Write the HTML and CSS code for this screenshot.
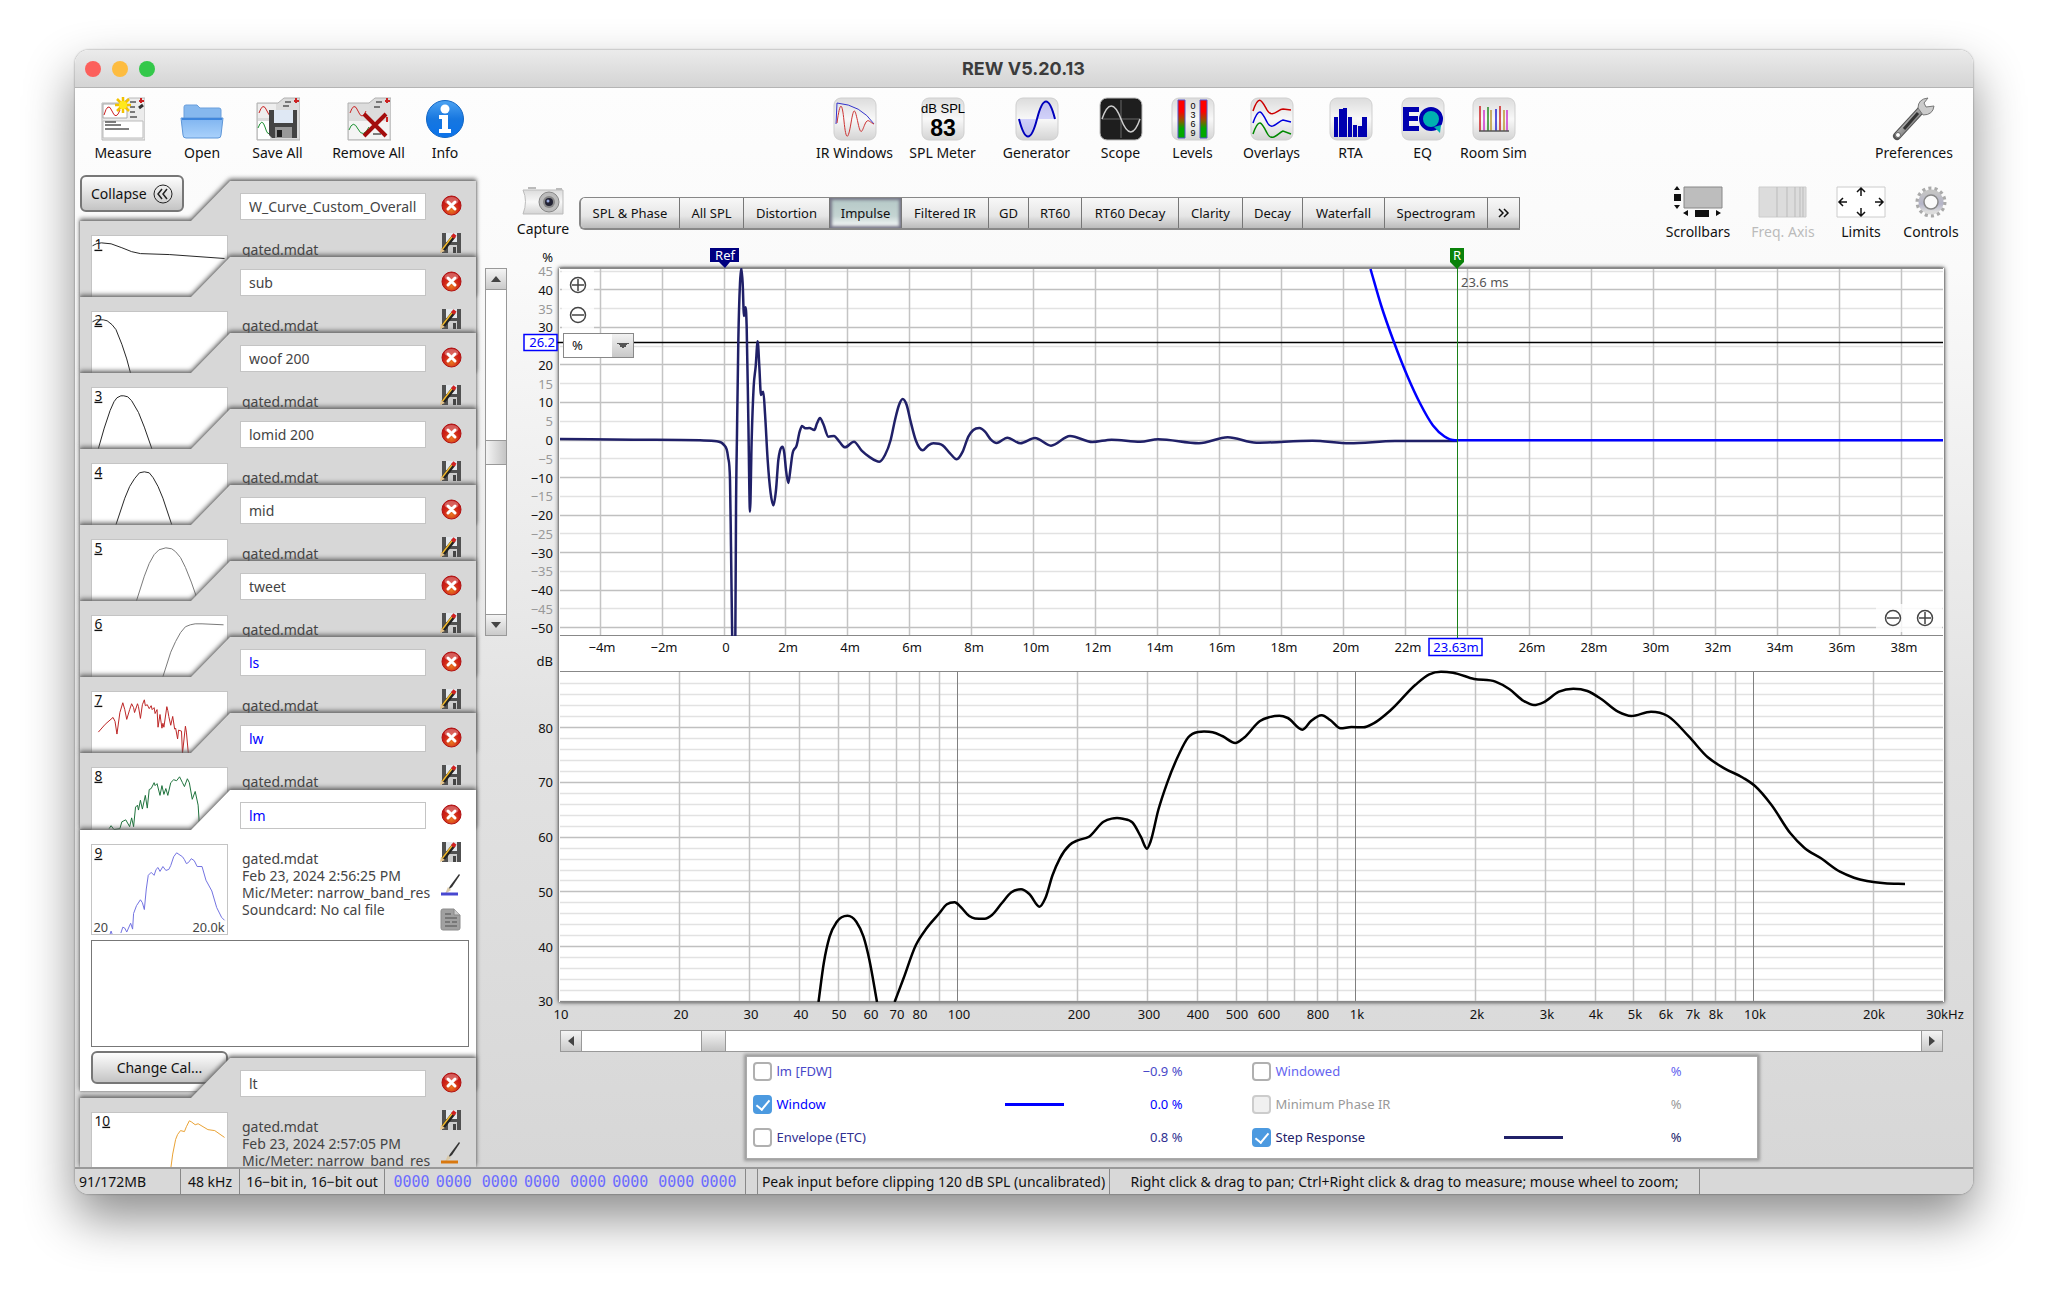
FILE: index.html
```html
<!DOCTYPE html>
<html lang="en">
<head>
<meta charset="utf-8">
<title>REW V5.20.13</title>
<link rel="stylesheet" href="styles.css">
</head>
<body>
<svg class="defs" aria-hidden="true">
  <defs>
    <linearGradient id="tile" x1="0" y1="0" x2="0" y2="1"><stop offset="0" stop-color="#dcdcdc"/><stop offset=".5" stop-color="#f8f8f8"/><stop offset="1" stop-color="#d4d4d4"/></linearGradient>
    <linearGradient id="folder" x1="0" y1="0" x2="0" y2="1"><stop offset="0" stop-color="#7fb4f0"/><stop offset="1" stop-color="#a9d1fb"/></linearGradient>
    <linearGradient id="info" x1="0" y1="0" x2="0" y2="1"><stop offset="0" stop-color="#4da3f2"/><stop offset=".5" stop-color="#1777e0"/><stop offset="1" stop-color="#0a72ea"/></linearGradient>
    <linearGradient id="level" x1="0" y1="0" x2="0" y2="1"><stop offset=".3" stop-color="#f00"/><stop offset=".55" stop-color="#8a5a00"/><stop offset=".75" stop-color="#00a800"/></linearGradient>
    <radialGradient id="red" cx=".5" cy=".75" r=".8"><stop offset="0" stop-color="#e87820"/><stop offset=".5" stop-color="#cf2418"/><stop offset="1" stop-color="#b80c10"/></radialGradient>
    <linearGradient id="steel" x1="0" y1="0" x2="1" y2="1"><stop offset="0" stop-color="#eee"/><stop offset=".5" stop-color="#999"/><stop offset="1" stop-color="#444"/></linearGradient>
    <linearGradient id="gear" x1="0" y1="0" x2="0" y2="1"><stop offset="0" stop-color="#c4c4c4"/><stop offset=".6" stop-color="#b4b4c8"/><stop offset="1" stop-color="#dcdcdc"/></linearGradient>
  </defs>
  <symbol id="i-delete" viewBox="0 0 21 21"><circle cx="10.500" cy="10.500" r="9.500" fill="url(#red)" stroke="#b01010"/><ellipse cx="10.500" cy="6" rx="7" ry="4" fill="#fff" opacity=".3"/><path d="M7 7l7 7M14 7l-7 7" stroke="#fff" stroke-width="3" stroke-linecap="round"/></symbol>
  <symbol id="i-save" viewBox="0 0 22 20"><path d="M2 0H21V20H2Z" fill="#505050"/><path d="M6 0H17V9H6Z" fill="#e4e8ec"/><path d="M8 12H17V20H8Z" fill="#ccc"/><path d="M13 14h3v6h-3z" fill="#444"/><path d="M3 17L14 3" stroke="#222" stroke-width="4"/><path d="M2.500 16L13 2.500" stroke="#f2b92c" stroke-width="1.500"/><path d="M12.500 4.500l2.500-3" stroke="#d02020" stroke-width="4"/><path d="M0 20l1-5 4 3z" fill="#e8c890"/></symbol>
  <symbol id="i-brush" viewBox="0 0 22 24"><path d="M19 1L10 13l-2 4 4-3L20 2z" fill="#333"/><path d="M8 14l3 3-6 4z" fill="#d8c8a8"/><path d="M1 21h17" stroke="currentColor" stroke-width="3"/></symbol>
  <symbol id="i-note" viewBox="0 0 22 24"><path d="M3 1h11l6 6v13q0 2-2 2H3q-2 0-2-2V3q0-2 2-2z" fill="#a0a0a0" stroke="#8c8c8c"/><path d="M14 1v6h6" fill="#ccc" stroke="#888"/><path d="M5 6h6M5 10h12M5 14h5M12 14h5M5 18h12" stroke="#777" stroke-width="2"/></symbol>
</svg>

<main class="window">
  <header class="titlebar">
    <div class="lights"><i class="light red"></i><i class="light amber"></i><i class="light green"></i></div>
    <h1>REW V5.20.13</h1>
  </header>

  <nav class="toolbar" aria-label="Main toolbar">
    <div class="group group-file">
      <button class="tool"><svg width="44" height="44" viewBox="0 0 44 44"><path d="M1 6H21L28 1H44V43H1Z" fill="#ececec" stroke="#b8b8b8"/><path d="M2 7H26V21H2Z" fill="#fff" stroke="#aaa"/><path d="M3 18Q7 4 11 14T19 13" fill="none" stroke="#c22"/><path d="M2 24H42V41H2Z" fill="#fff" stroke="#bbb"/><path d="M4 25h11M4 28h16M4 32h24M29 5h6M29 10h5M29 15h5M29 20h7" stroke="#555" stroke-width="1.500"/><path d="M40 1v5M38 4h5" stroke="#c22" stroke-width="2"/><path d="M38 11l4-3" stroke="#333" stroke-width="3"/><path d="M22 0v16M14 8h16M16 2l12 12M28 2L16 14" stroke="#f2c200" stroke-width="2.500"/><circle cx="22" cy="8" r="4" fill="#ffe81c"/></svg>Measure</button>
      <button class="tool"><svg width="44" height="44" viewBox="0 0 44 44"><path d="M4 22V10q0-2 2-2h11l3 3h19q2 0 2 2v9z" fill="#86b8ee" stroke="#6a9fdc"/><path d="M1 21H43L41 38q0 3-3 3H6q-3 0-3-3z" fill="url(#folder)" stroke="#5f97d8"/><path d="M2 22H42" stroke="#3f86dc" stroke-width="2"/></svg>Open</button>
      <button class="tool"><svg width="44" height="44" viewBox="0 0 44 44"><path d="M1 6H22L28 1H44V43H1Z" fill="#dcdcdc" stroke="#b0b0b0"/><path d="M2 7H20V21H2Z" fill="#eee"/><path d="M2 24H14V42H2Z" fill="#fff"/><path d="M3 16Q7 4 11 14T19 14" fill="none" stroke="#c22"/><path d="M2 31Q6 20 9 30T14 35" fill="none" stroke="#1a9030"/><path d="M29 5h6M27 9h6" stroke="#555" stroke-width="1.500"/><path d="M40 1v5M38 4h5" stroke="#c22" stroke-width="2"/><path d="M13 13H41V41H16L13 38Z" fill="#444"/><path d="M18 13H37V26H18Z" fill="#dfe8f4"/><path d="M19 30H36V41H19Z" fill="#999"/><path d="M21 33h5v7h-5z" fill="#222"/></svg>Save All</button>
      <button class="tool"><svg width="44" height="44" viewBox="0 0 44 44"><path d="M1 6H22L28 1H44V43H1Z" fill="#dcdcdc" stroke="#b0b0b0"/><path d="M2 7H22V21H2Z" fill="#ddd"/><path d="M2 24H42V42H2Z" fill="#f4f4f4"/><path d="M3 16Q7 4 11 14T19 14" fill="none" stroke="#c22"/><path d="M2 33Q6 22 11 32T22 30" fill="none" stroke="#1a9030"/><path d="M29 5h6M27 10h6M26 37h8" stroke="#555" stroke-width="1.500"/><path d="M40 1v5M38 4h5M40 20v5" stroke="#c22" stroke-width="2"/><path d="M17 17L39 39M39 17L17 39" stroke="#a30c0c" stroke-width="4"/></svg>Remove All</button>
      <button class="tool"><svg width="44" height="44" viewBox="0 0 44 44"><circle cx="22" cy="22" r="18.500" fill="url(#info)" stroke="#1266c4"/><circle cx="22" cy="12" r="4.500" fill="#fff"/><path d="M16 18H25V32H28V36H16V32H19V22H16Z" fill="#fff"/></svg>Info</button>
    </div>
    <div class="group group-tools">
      <button class="tool"><svg width="44" height="44" viewBox="0 0 44 44"><rect x="1" y="1" width="42" height="42" rx="7" fill="url(#tile)" stroke="#cfcfcf"/><path d="M3 27L4 6Q28 8 41 27" fill="none" stroke="#33c"/><path d="M4 26C7 4 9 4 11 24S15 44 18 26S22 12 25 26S29 34 32 27S37 26 41 27" fill="none" stroke="#c33"/></svg>IR Windows</button>
      <button class="tool"><svg width="44" height="44" viewBox="0 0 44 44"><rect x="1" y="1" width="42" height="42" rx="7" fill="url(#tile)" stroke="#cfcfcf"/><text x="22" y="16" class="dial-unit">dB SPL</text><text x="22" y="39" class="dial">83</text></svg>SPL Meter</button>
      <button class="tool"><svg width="44" height="44" viewBox="0 0 44 44"><rect x="1" y="1" width="42" height="42" rx="7" fill="url(#tile)" stroke="#cfcfcf"/><path d="M4 22Q13 57 22 22Q31 -13 40 22Z" fill="#88f" fill-opacity=".35"/><path d="M4 22Q13 57 22 22T40 22" fill="none" stroke="#00b" stroke-width="2"/></svg>Generator</button>
      <button class="tool"><svg width="44" height="44" viewBox="0 0 44 44"><rect x="1" y="1" width="42" height="42" rx="7" fill="#1e1e1e" stroke="#bbb"/><path d="M22 3V41M3 22H41" stroke="#666"/><path d="M3 22Q12 -4 22 22T41 22" fill="none" stroke="#ccc" stroke-width="1.500"/></svg>Scope</button>
      <button class="tool"><svg width="44" height="44" viewBox="0 0 44 44"><rect x="1" y="1" width="42" height="42" rx="7" fill="url(#tile)" stroke="#cfcfcf"/><path d="M7 3h7v38H7zM29 3h7v38h-7z" fill="url(#level)" stroke="#55c"/><g class="marks"><text x="22" y="12">0</text><text x="22" y="21">3</text><text x="22" y="30">6</text><text x="22" y="39">9</text></g></svg>Levels</button>
      <button class="tool"><svg width="44" height="44" viewBox="0 0 44 44"><rect x="1" y="1" width="42" height="42" rx="7" fill="url(#tile)" stroke="#cfcfcf"/><g fill="none" stroke-width="1.500"><path d="M3 14C9-4 12 4 17 13S28 12 33 12T41 13" stroke="#c00"/><path d="M3 26C9 8 12 15 17 25S28 24 33 23T41 25" stroke="#00d"/><path d="M3 37C9 19 12 26 17 36S28 36 33 34T41 37" stroke="#080"/></g></svg>Overlays</button>
      <button class="tool"><svg width="44" height="44" viewBox="0 0 44 44"><rect x="1" y="1" width="42" height="42" rx="7" fill="url(#tile)" stroke="#cfcfcf"/><path d="M5 20h4v20H5zM10 12h4v28h-4zM14 11h4v29h-4zM19 20h4v20h-4zM24 28h4v12h-4zM29 29h4v11h-4zM33 20h5v20h-5z" fill="#0000b0"/></svg>RTA</button>
      <button class="tool"><svg width="44" height="44" viewBox="0 0 44 44"><rect x="1" y="1" width="42" height="42" rx="7" fill="url(#tile)" stroke="#cfcfcf"/><path d="M2 10H18V15H8V19H17V24H8V29H18V34H2Z" fill="#0000b0"/><circle cx="30" cy="22" r="10" fill="#00b0b0" stroke="#0000b0" stroke-width="4"/><path d="M33 30l7-2-1 8z" fill="#00b0b0"/></svg>EQ</button>
      <button class="tool"><svg width="44" height="44" viewBox="0 0 44 44"><rect x="1" y="1" width="42" height="42" rx="7" fill="url(#tile)" stroke="#cfcfcf"/><g stroke-width="1.500"><path d="M8 9V34M28 9V34" stroke="#c22"/><path d="M12 13V34M35 13V34" stroke="#c3c"/><path d="M16 10V34" stroke="#282"/><path d="M19 13V34M32 13V34" stroke="#b93"/><path d="M24 12V34" stroke="#22c"/><path d="M7 34H37" stroke="#555"/></g></svg>Room Sim</button>
    </div>
    <div class="group group-prefs">
      <button class="tool"><svg width="44" height="44" viewBox="0 0 44 44"><path d="M5 39L29 13" stroke="#555" stroke-width="8" stroke-linecap="round"/><path d="M6 38L29 13" stroke="url(#steel)" stroke-width="6" stroke-linecap="round"/><path d="M12 32L26 16" stroke="#333" stroke-width="3"/><path d="M26 11Q26 2 36 1L32 6L34 10L42 9Q41 18 31 18Z" fill="#ccc" stroke="#777"/><circle cx="6" cy="38" r="2.500" fill="#fff" stroke="#666"/></svg>Preferences</button>
    </div>
  </nav>

  <div class="content">
    <aside class="sidebar">
      <button class="push collapse">Collapse <svg width="20" height="20" viewBox="0 0 20 20" fill="none" stroke="#222"><circle cx="10" cy="10" r="9"/><path d="M9 5L5 10l4 5M14 5l-4 5 4 5" stroke-width="1.500"/></svg></button>
      <div class="cards">
        <section class="card"><div class="shape"></div>
          <svg class="thumb" viewBox="0 0 137 91"><polyline stroke="#222" points="0,10 4,8 9,7 19,8 30,12 40,16 49,18 79,19 135,23"/><text x="2" y="13" class="num">1</text></svg>
          <div class="meta"><input class="name" aria-label="Measurement 1 name" value="W_Curve_Custom_Overall"><p>gated.mdat</p></div>
          <div class="acts"><button aria-label="Remove"><svg width="21" height="21"><use href="#i-delete"/></svg></button><button aria-label="Save"><svg width="22" height="20"><use href="#i-save"/></svg></button></div></section>
        <section class="card"><div class="shape"></div>
          <svg class="thumb" viewBox="0 0 137 91"><polyline stroke="#222" points="0,10 4,8 11,8 15,9 20,13 24,18 30,33 35,48 39,63"/><text x="2" y="13" class="num">2</text></svg>
          <div class="meta"><input class="name" aria-label="Measurement 2 name" value="sub"><p>gated.mdat</p></div>
          <div class="acts"><button aria-label="Remove"><svg width="21" height="21"><use href="#i-delete"/></svg></button><button aria-label="Save"><svg width="22" height="20"><use href="#i-save"/></svg></button></div></section>
        <section class="card"><div class="shape"></div>
          <svg class="thumb" viewBox="0 0 137 91"><polyline stroke="#222" points="6,62 12,41 18,23 22,14 25,10 29,8 32,8 36,9 40,13 47,25 53,40 61,63"/><text x="2" y="13" class="num">3</text></svg>
          <div class="meta"><input class="name" aria-label="Measurement 3 name" value="woof 200"><p>gated.mdat</p></div>
          <div class="acts"><button aria-label="Remove"><svg width="21" height="21"><use href="#i-delete"/></svg></button><button aria-label="Save"><svg width="22" height="20"><use href="#i-save"/></svg></button></div></section>
        <section class="card"><div class="shape"></div>
          <svg class="thumb" viewBox="0 0 137 91"><polyline stroke="#222" points="24,62 33,35 38,23 43,15 48,9 53,8 58,9 62,14 67,23 72,35 81,62"/><text x="2" y="13" class="num">4</text></svg>
          <div class="meta"><input class="name" aria-label="Measurement 4 name" value="lomid 200"><p>gated.mdat</p></div>
          <div class="acts"><button aria-label="Remove"><svg width="21" height="21"><use href="#i-delete"/></svg></button><button aria-label="Save"><svg width="22" height="20"><use href="#i-save"/></svg></button></div></section>
        <section class="card"><div class="shape"></div>
          <svg class="thumb" viewBox="0 0 137 91"><polyline stroke="#777" points="45,62 53,37 58,24 63,15 68,10 75,8 81,9 85,12 90,18 95,28 101,43 108,63"/><text x="2" y="13" class="num">5</text></svg>
          <div class="meta"><input class="name" aria-label="Measurement 5 name" value="mid"><p>gated.mdat</p></div>
          <div class="acts"><button aria-label="Remove"><svg width="21" height="21"><use href="#i-delete"/></svg></button><button aria-label="Save"><svg width="22" height="20"><use href="#i-save"/></svg></button></div></section>
        <section class="card"><div class="shape"></div>
          <svg class="thumb" viewBox="0 0 137 91"><polyline stroke="#777" points="72,62 80,37 85,26 90,17 95,11 100,9 105,8 112,8 134,9"/><text x="2" y="13" class="num">6</text></svg>
          <div class="meta"><input class="name" aria-label="Measurement 6 name" value="tweet"><p>gated.mdat</p></div>
          <div class="acts"><button aria-label="Remove"><svg width="21" height="21"><use href="#i-delete"/></svg></button><button aria-label="Save"><svg width="22" height="20"><use href="#i-save"/></svg></button></div></section>
        <section class="card"><div class="shape"></div>
          <svg class="thumb" viewBox="0 0 137 91"><polyline stroke="#b22" points="6,41 13,33 21,26 23,30 25,43 28,21 31,11 33,18 35,28 38,18 40,12 42,16 43,21 46,12 47,15 49,27 51,13 53,8 54,14 56,13 58,17 60,14 61,18 63,16 64,22 66,18 67,36 69,23 71,37 72,32 73,36 76,15 77,19 78,25 80,34 82,25 84,38 85,37 87,48 88,39 91,40 92,63 95,35 96,41 98,63"/><text x="2" y="13" class="num">7</text></svg>
          <div class="meta"><input class="name own" aria-label="Measurement 7 name" value="ls"><p>gated.mdat</p></div>
          <div class="acts"><button aria-label="Remove"><svg width="21" height="21"><use href="#i-delete"/></svg></button><button aria-label="Save"><svg width="22" height="20"><use href="#i-save"/></svg></button></div></section>
        <section class="card"><div class="shape"></div>
          <svg class="thumb" viewBox="0 0 137 91"><polyline stroke="#1a7038" points="17,62 19,59 22,63 28,62 30,55 34,53 38,60 40,51 42,60 44,40 46,38 47,43 49,33 51,42 54,28 56,41 58,22 60,21 63,15 64,18 66,16 69,28 71,18 73,27 75,21 77,28 80,15 83,12 86,13 89,9 92,15 94,19 97,11 99,15 102,32 105,24 108,38 109,54 110,63"/><text x="2" y="13" class="num">8</text></svg>
          <div class="meta"><input class="name own" aria-label="Measurement 8 name" value="lw"><p>gated.mdat</p></div>
          <div class="acts"><button aria-label="Remove"><svg width="21" height="21"><use href="#i-delete"/></svg></button><button aria-label="Save"><svg width="22" height="20"><use href="#i-save"/></svg></button></div></section>
        <section class="card selected"><div class="shape"></div>
          <svg class="thumb" viewBox="0 0 137 91"><g stroke="#7070e0"><polyline points="18,91 19,88 20,91"/><polyline points="29,90 31,84 33,85 35,89 39,80 41,86 42,70 45,62 49,56 51,59 53,66 55,45 57,31 60,28 63,31 65,25 67,23 69,27 72,22 75,26 78,25 80,21 83,12 86,8 92,12 94,15 96,19 98,18 101,14 104,16 107,22 112,22 116,36 122,47 127,64 132,74 135,77"/></g><text x="2" y="13" class="num">9</text><text x="1" y="89" class="range">20</text><text x="135" y="89" class="range end">20.0k</text></svg>
          <div class="meta"><input class="name own" aria-label="Measurement 9 name" value="lm"><p>gated.mdat<br>Feb 23, 2024 2:56:25 PM<br>Mic/Meter: narrow_band_res<br>Soundcard: No cal file</p></div>
          <div class="acts"><button aria-label="Remove"><svg width="21" height="21"><use href="#i-delete"/></svg></button><button aria-label="Save"><svg width="22" height="20"><use href="#i-save"/></svg></button><button class="tint-blue" aria-label="Trace colour"><svg width="22" height="24"><use href="#i-brush"/></svg></button><button aria-label="Notes"><svg width="22" height="24"><use href="#i-note"/></svg></button></div>
          <textarea class="notes" aria-label="Notes for lm"></textarea>
          <button class="push change">Change Cal...</button></section>
        <section class="card last"><div class="shape"></div>
          <svg class="thumb" viewBox="0 0 137 91"><polyline stroke="#e8a030" points="80,57 82,42 85,27 87,22 90,18 94,19 96,14 99,8 101,9 105,12 108,11 118,17 125,18 135,25"/><text x="2" y="13" class="num plain">1<tspan class="num">0</tspan></text></svg>
          <div class="meta"><input class="name" aria-label="Measurement 10 name" value="lt"><p>gated.mdat<br>Feb 23, 2024 2:57:05 PM<br>Mic/Meter: narrow_band_res</p></div>
          <div class="acts"><button aria-label="Remove"><svg width="21" height="21"><use href="#i-delete"/></svg></button><button aria-label="Save"><svg width="22" height="20"><use href="#i-save"/></svg></button><button class="tint-orange" aria-label="Trace colour"><svg width="22" height="24"><use href="#i-brush"/></svg></button></div></section>
      </div>
    </aside>

    <div class="vscroll">
      <button class="arrow" aria-label="Up"><svg width="10" height="6"><path d="M0 6L5 0l5 6z"/></svg></button>
      <div class="gap-before"></div><div class="knob"></div><div class="gap-after"></div>
      <button class="arrow" aria-label="Down"><svg width="10" height="6"><path d="M0 0L5 6l5-6z"/></svg></button>
    </div>

    <section class="graph">
      <div class="graph-head">
        <button class="tool capture"><svg width="42" height="28" viewBox="0 0 42 28"><path d="M6 1h8M34 2h6" stroke="#bbb" stroke-width="2"/><path d="M1 3H41V27H1Q6 14 1 3Z" fill="url(#tile)" stroke="#bbb"/><circle cx="27" cy="15" r="10" fill="#bbb" stroke="#888"/><circle cx="27" cy="15" r="6" fill="#888"/><circle cx="27" cy="15" r="4" fill="#223"/><circle cx="26" cy="14" r="1.500" fill="#9ad"/></svg>Capture</button>
        <div class="tabs" role="tablist">
          <button role="tab">SPL &amp; Phase</button><button role="tab">All SPL</button><button role="tab">Distortion</button><button role="tab" class="on" aria-selected="true">Impulse</button><button role="tab">Filtered IR</button><button role="tab">GD</button><button role="tab">RT60</button><button role="tab">RT60 Decay</button><button role="tab">Clarity</button><button role="tab">Decay</button><button role="tab">Waterfall</button><button role="tab">Spectrogram</button><button aria-label="More tabs"><svg width="12" height="10" fill="none" stroke="#111" stroke-width="1.500"><path d="M1 1l4 4-4 4M6 1l4 4-4 4"/></svg></button>
        </div>
        <div class="options">
          <button class="tool"><svg width="50" height="32" viewBox="0 0 50 32"><path d="M11 1H49V22H11Z" fill="#bdbdbd" stroke="#888"/><path d="M1 4L4 0l3 4zM1 19l3 4 3-4zM15 24v6l-5-3zM43 24v6l5-3zM1 8h7v7H1zM22 24h14v7H22z" fill="#111"/></svg>Scrollbars</button>
          <button class="tool" disabled><svg width="50" height="32" viewBox="0 0 50 32"><path d="M1 1H48V31H1Z" fill="#dcdcdc" stroke="#ccc"/><path d="M19 1V31M29 1V31M37 1V31M42 1V31M45 1V31" stroke="#bbb"/></svg>Freq. Axis</button>
          <button class="tool"><svg width="50" height="32" viewBox="0 0 50 32" fill="none"><path d="M1 1H49V31H1Z" fill="#fff" stroke="#ccc"/><path d="M25 2V10M21 6l4-4 4 4M25 30V22M21 26l4 4 4-4M3 16H11M7 12l-4 4 4 4M47 16H39M43 12l4 4-4 4" stroke="#111" stroke-width="1.500"/></svg>Limits</button>
          <button class="tool"><svg width="32" height="32" viewBox="0 0 32 32" fill="none"><circle cx="16" cy="16" r="13.500" stroke="#aaa" stroke-width="4" stroke-dasharray="3 3.060"/><circle cx="16" cy="16" r="9.500" stroke="url(#gear)" stroke-width="6"/><circle cx="16" cy="16" r="7" fill="#fafafa" stroke="#888" stroke-width="1.500"/></svg>Controls</button>
        </div>
      </div>

      <div class="chart-wrap">
        <svg id="chart" class="chart" viewBox="510 240 1458 788" role="img" aria-label="Impulse response and frequency response"></svg>
        <div class="zoom zoom-y">
          <button aria-label="Zoom in vertically"><svg width="18" height="18"><circle cx="9" cy="9" r="7.500"/><path d="M3 9h12M9 3v12"/></svg></button>
          <button aria-label="Zoom out vertically"><svg width="18" height="18"><circle cx="9" cy="9" r="7.500"/><path d="M3 9h12"/></svg></button>
        </div>
        <select class="unit" aria-label="Vertical unit"><option>%</option></select>
        <div class="zoom zoom-x">
          <button aria-label="Zoom out horizontally"><svg width="18" height="18"><circle cx="9" cy="9" r="7.500"/><path d="M3 9h12"/></svg></button>
          <button aria-label="Zoom in horizontally"><svg width="18" height="18"><circle cx="9" cy="9" r="7.500"/><path d="M3 9h12M9 3v12"/></svg></button>
        </div>
      </div>

      <div class="hscroll">
        <button class="arrow" aria-label="Left"><svg width="6" height="10"><path d="M6 0L0 5l6 5z"/></svg></button>
        <div class="gap-before"></div><div class="knob"></div><div class="gap-after"></div>
        <button class="arrow" aria-label="Right"><svg width="6" height="10"><path d="M0 0l6 5-6 5z"/></svg></button>
      </div>

      <div class="legend">
        <div class="trace c-fdw"><label><input type="checkbox">lm [FDW]</label><i></i><output>−0.9 %</output></div>
        <div class="trace c-windowed"><label><input type="checkbox">Windowed</label><i></i><output>%</output></div>
        <div class="trace c-window"><label><input type="checkbox" checked>Window</label><i class="sample"></i><output>0.0 %</output></div>
        <div class="trace c-off"><label><input type="checkbox" disabled>Minimum Phase IR</label><i></i><output>%</output></div>
        <div class="trace c-env"><label><input type="checkbox">Envelope (ETC)</label><i></i><output>0.8 %</output></div>
        <div class="trace c-step"><label><input type="checkbox" checked>Step Response</label><i class="sample"></i><output>%</output></div>
      </div>
    </section>
  </div>

  <footer class="status">
    <span>91/172MB</span><span>48 kHz</span><span>16−bit in, 16−bit out</span>
    <span class="bits"><b>0000</b><b>0000</b><b class="word">0000</b><b>0000</b><b class="word">0000</b><b>0000</b><b class="word">0000</b><b>0000</b></span>
    <span></span><span>Peak input before clipping 120 dB SPL (uncalibrated)</span><span>Right click &amp; drag to pan; Ctrl+Right click &amp; drag to measure; mouse wheel to zoom;</span><span></span>
  </footer>
</main>
<script src="charts.js"></script>
</body>
</html>
```
FILE: styles.css
```css
* { box-sizing: border-box; }
body { margin: 0; padding: 50px 75px 99px; background: #fff; font: 14px/17px "Noto Sans", "Open Sans", sans-serif; color: #111; }
button, input, select, textarea { font: inherit; color: inherit; margin: 0; }
button { padding: 0; border: 0; background: none; }
.defs { position: absolute; width: 0; height: 0; }

.window { display: flex; flex-direction: column; border-radius: 14px; overflow: hidden; background: linear-gradient(#fdfdfd 37px, #fafafa 220px, #e2e2e2 680px, #d7d7d7 1118px); box-shadow: 0 0 2px rgba(0,0,0,.5), 0 24px 50px rgba(0,0,0,.45); }
.titlebar { display: grid; grid-template-columns: 1fr auto 1fr; align-items: center; height: 38px; padding: 0 11px 0 10px; background: linear-gradient(#ebebeb, #d4d4d4); border-bottom: 1px solid #b4b4b4; }
.titlebar h1 { margin: 0; font: 700 18px/20px Inter, sans-serif; color: #3c3c3c; }
.lights { display: flex; gap: 11px; }
.light { width: 16px; height: 16px; border-radius: 50%; }
.light.red { background: #fc605c; }
.light.amber { background: #fdbc40; }
.light.green { background: #34c84a; }

.toolbar { display: flex; justify-content: space-between; height: 82px; padding: 9px 18px 0 7px; }
.group { display: grid; }
.group-file { grid-template-columns: 82px 76px 75px 107px 46px; }
.group-tools { grid-template-columns: 90px 86px 102px 66px 78px 80px 78px 66px 76px; }
.group-prefs { grid-template-columns: 82px; }
.tool { display: flex; flex-direction: column; align-items: center; gap: 3px; white-space: nowrap; }
.tool:disabled { color: #bbb; }
.tool svg { flex: none; }
.dial-unit { font: 13px "Liberation Sans", sans-serif; text-anchor: middle; }
.dial { font: 700 23px "Liberation Sans", sans-serif; text-anchor: middle; }
.marks { font: 9px "Liberation Sans", sans-serif; text-anchor: middle; }

.content { display: grid; grid-template-columns: 401px 29px minmax(0, 1fr); padding: 0 5px; overflow: hidden; }
.push { border: 2px solid #777; border-radius: 6px; background: linear-gradient(#fdfdfd, #e4e4e4 45%, #c4c4c4); }
.collapse { display: flex; align-items: center; justify-content: space-between; width: 104px; height: 37px; margin-top: 5px; padding: 0 9px; position: relative; z-index: 1; }
.cards { width: 396px; margin-top: -31px; }
.card { position: relative; isolation: isolate; display: grid; grid-template-columns: 137px 186px 22px; grid-template-rows: 104px auto; column-gap: 13px; height: 116px; margin-bottom: -40px; padding: 12px 10px 0 11px; color: #444; }
.shape { position: absolute; inset: 0; z-index: -1; filter: drop-shadow(0 0 1px #777) drop-shadow(0 -2px 2px rgba(80,80,80,.8)); }
.shape::before { content: ""; position: absolute; inset: 0; background: #d7d7d7; clip-path: polygon(0 40px, 111px 40px, 150px 0, 100% 0, 100% 100%, 0 100%); }
.selected { height: 301px; margin: 1px 0 -33px; grid-template-rows: 147px 106px 33px; }
.selected .shape::before { background: #fff; }
.last { height: 109px; margin-bottom: 0; }
.thumb { width: 137px; height: 91px; margin-top: 42px; border: 1px solid #c4c4c4; background: #fff; overflow: hidden; }
.thumb polyline { fill: none; }
.num { fill: #111; text-decoration: underline; }
.num.plain { text-decoration: none; }
.range { fill: #444; font-size: 13px; }
.range.end { text-anchor: end; }
.meta { min-width: 0; margin-left: -1px; }
.meta p { margin: 21px 0 0 2px; white-space: nowrap; }
.name { display: block; width: 186px; height: 27px; padding: 0 8px; border: 1px solid #c4c4c4; background: #fff; }
.name.own { color: #00f; }
.acts { display: flex; flex-direction: column; align-items: center; padding-top: 2px; }
.acts button, .acts svg { display: block; }
.acts button:nth-child(2) { margin-top: 17px; }
.acts button:nth-child(3) { margin-top: 11px; }
.acts button:nth-child(4) { margin-top: 11px; }
.tint-blue { color: #4848d0; }
.tint-orange { color: #d87810; }
.notes { grid-column: 1 / -1; width: 378px; height: 107px; margin-top: -9px; border: 1px solid #777; background: #fff; resize: none; }
.change { width: 137px; height: 33px; margin-top: -4px; color: #111; }

.vscroll { display: flex; flex-direction: column; align-self: start; width: 22px; height: 368px; margin: 98px 0 0 4px; border: 1px solid #999; background: #fff; }
.hscroll { display: flex; height: 22px; margin: 2px 25px 0 50px; border: 1px solid #999; background: #fff; }
.arrow { flex: none; display: grid; place-items: center; width: 20px; height: 20px; background: linear-gradient(#f4f4f4, #cacaca); outline: 1px solid #999; fill: #444; }
.knob { flex: none; background: linear-gradient(#f4f4f4, #c4c4c4); outline: 1px solid #999; }
.vscroll .knob { height: 23px; background: linear-gradient(90deg, #f4f4f4, #c4c4c4); }
.hscroll .knob { width: 23px; }
.vscroll .gap-before, .vscroll .gap-after { flex: 1; }
.hscroll .gap-before { flex: 10; }
.hscroll .gap-after { flex: 99; }

.graph { display: flex; flex-direction: column; min-width: 0; padding-bottom: 8px; font-size: 13px; }
.graph-head { display: flex; height: 70px; align-items: flex-start; }
.capture { width: 66px; margin: 17px 3px 0 0; gap: 5px; font-size: 14px; }
.tabs { display: grid; grid-template-columns: 99px 64px 86px 72px 87px 40px 53px 97px 64px 60px 82px 103px 32px; height: 33px; margin-top: 27px; border: solid #888; border-width: 1px 0 2px 2px; border-radius: 6px 0 0 6px; overflow: hidden; }
.tabs button { display: grid; place-items: center; white-space: nowrap; border-right: 1px solid #777; background: linear-gradient(#f8f8f8, #e6e6e6 60%, #bbb); }
.tabs .on { background: linear-gradient(#b4c8c6, #c4d4d2 60%, #fff); box-shadow: inset 0 0 3px 2px #778; }
.options { display: grid; grid-template-columns: 80px 90px 66px 74px; margin-left: auto; padding-top: 16px; font-size: 14px; }
.options .tool { gap: 5px; }

.chart-wrap { position: relative; }
.chart { display: block; width: 100%; }
.chart text { fill: #111; }
.chart .end { text-anchor: end; }
.chart .mid { text-anchor: middle; }
.chart .soft { fill: #999; }
.chart .readout { fill: #555; }
.chart .cursor { fill: #00f; }
.chart .flag { fill: #fff; }
.plot { fill: #fff; filter: drop-shadow(0 0 1px #555) drop-shadow(0 0 2px #555); }
.trace-line { fill: none; stroke-width: 2.500; stroke-linejoin: round; }
.zoom { position: absolute; display: flex; background: rgba(255,255,255,.8); }
.zoom svg { display: block; fill: none; stroke: #444; stroke-width: 1.500; }
.zoom-y { left: 52px; top: 30px; flex-direction: column; gap: 12px; padding: 6px 7px; }
.zoom-x { right: 26px; bottom: 396px; gap: 14px; padding: 5px 8px; }
.unit { position: absolute; left: 53px; top: 93px; width: 71px; height: 25px; padding: 0 8px; border: 1px solid #888; border-radius: 0; appearance: none; background: conic-gradient(from -45deg at 50% 100%, #555 90deg, transparent 0) no-repeat right 5px center/12px 6px, linear-gradient(#f2f2f2, #c8c8c8) no-repeat right/21px 100%, #fff; background: linear-gradient(to bottom right, #555 50%, transparent 50%) no-repeat right 4px center/6px 6px, linear-gradient(to bottom left, #555 50%, transparent 50%) no-repeat right 10px center/6px 6px, linear-gradient(#f2f2f2, #c8c8c8) no-repeat right/21px 100%, #fff; }

.legend { display: grid; grid-template-columns: 499px 499px; grid-auto-rows: 33px; align-self: center; width: 1012px; height: 103px; margin: 4px 0 0 25px; padding-left: 6px; background: #fff; border: 1px solid #aaa; box-shadow: 0 0 3px 2px #999; }
.trace { display: grid; grid-template-columns: 252px 59px 119px; align-items: center; height: 29px; }
.trace label { display: flex; align-items: center; gap: 5px; }
.trace output { text-align: right; }
.trace input { position: relative; appearance: none; width: 19px; height: 19px; border: 2px solid #b0b0b0; border-radius: 4px; background: #fff; }
.trace input:checked { border-color: #4c9ae0; background: #4c9ae0; }
.trace input:checked::after { content: ""; position: absolute; left: 4px; top: 0; width: 6px; height: 11px; border: solid #fff; border-width: 0 2px 2px 0; rotate: 40deg; }
.trace input:disabled { background: #f0f0f0; border-color: #ccc; }
.sample { height: 3px; background: currentColor; }
.c-fdw { color: #4848c8; }
.c-windowed { color: #6464f0; }
.c-window { color: #00f; }
.c-off { color: #999; }
.c-env { color: #303090; }
.c-step { color: #202068; }

.status { display: grid; grid-template-columns: 106px 59px 145px 361px 12px 352px 590px 1fr; height: 27px; border-top: 2px solid #999; background: #d8d8d8; white-space: nowrap; }
.status span { display: flex; align-items: center; justify-content: center; border-right: 1px solid #888; }
.status span:first-child { justify-content: flex-start; padding-left: 4px; }
.status span:last-child { border: 0; }
.status .bits { gap: 6px; font: 15px/20px "DejaVu Sans Mono", monospace; color: #6c6cff; }
.status .bits b { font-weight: 400; }
.status .word { margin-left: 4px; }
```
FILE: charts.js
```js
const svg = document.getElementById('chart');
const parts = [];
const rect = (x, y, w, h, attrs) => parts.push(`<rect x="${x}" y="${y}" width="${w}" height="${h}" ${attrs}/>`);
const line = (x1, y1, x2, y2, stroke, width = 1) => {
  parts.push(`<path d="M${x1} ${y1}L${x2} ${y2}" stroke="${stroke}" stroke-width="${width}"/>`);
};
const text = (x, y, str, cls) => parts.push(`<text x="${x}" y="${y}" class="${cls}">${str}</text>`);
const crisp = v => Math.floor(v) + 0.5;

// Monotone cubic interpolation through [x, y] points.
function smooth(pts) {
  const n = pts.length, d = [], h = [], m = [];
  for (let i = 0; i < n - 1; i++) {
    h.push(pts[i + 1][0] - pts[i][0]);
    d.push((pts[i + 1][1] - pts[i][1]) / h[i]);
  }
  m[0] = d[0];
  m[n - 1] = d[n - 2];
  for (let i = 1; i < n - 1; i++) {
    const mean = (d[i - 1] * h[i] + d[i] * h[i - 1]) / (h[i - 1] + h[i]);
    const limit = 3 * Math.min(Math.abs(d[i - 1]), Math.abs(d[i]));
    m[i] = d[i - 1] * d[i] <= 0 ? 0 : Math.sign(mean) * Math.min(Math.abs(mean), limit);
  }
  let out = `M${pts[0]}`;
  for (let i = 0; i < n - 1; i++) {
    const [x0, y0] = pts[i], [x1, y1] = pts[i + 1], k = h[i] / 3;
    out += `C${x0 + k} ${y0 + m[i] * k} ${x1 - k} ${y1 - m[i + 1] * k} ${x1} ${y1}`;
  }
  return out;
}
const trace = (pts, stroke, clip) => {
  parts.push(`<path class="trace-line" clip-path="url(#${clip})" stroke="${stroke}" d="${smooth(pts)}"/>`);
};

const L = 560, R = 1943;
parts.push('<clipPath id="top"><rect x="560" y="268" width="1383" height="368"/></clipPath>');
parts.push('<clipPath id="bottom"><rect x="560" y="670" width="1383" height="332"/></clipPath>');
rect(L - 1, 268, R - L + 2, 734, 'class="plot"');

// Impulse plot: time in ms against percent.
const tx = t => 724 + 30.99 * t;
const py = p => 440 - 3.755 * p;
for (let p = -50; p <= 45; p += 5) {
  const major = p % 10 === 0;
  line(L, crisp(py(p)), R, crisp(py(p)), major ? '#c0c0c0' : '#e2e2e2', 1.5);
  if (p !== 25) text(553, Math.round(py(p)) + 5, String(p).replace('-', '−'), major ? 'end' : 'end soft');
}
for (let t = -4; t <= 38; t += 2) {
  line(crisp(tx(t)), 268, crisp(tx(t)), 635, '#c4c4c4', 1.5);
  if (t !== 24) text(Math.round(tx(t)) + 2, 652, t ? String(t).replace('-', '−') + 'm' : '0', 'mid');
}
line(L, 268.5, R, 268.5, '#888');
line(L, 635.5, R, 635.5, '#888');
text(553, 262, '%', 'end');
text(553, 666, 'dB', 'end');

// Frequency plot: Hz on a log scale against dB.
const fx = f => 560 + 397.9 * (Math.log10(f) - 1);
const dy = d => 1001.4 - 5.474 * (d - 30);
for (let d = 30; d <= 88; d += 2) {
  const major = d % 10 === 0;
  line(L, crisp(dy(d)), R, crisp(dy(d)), major ? '#c0c0c0' : '#e2e2e2', 1.5);
  if (major) text(553, Math.round(dy(d)) + 5, d, 'end');
}
for (let dec = 10; dec <= 10000; dec *= 10) {
  for (let k = 1; k < 10; k++) {
    const f = dec * k;
    if (f > 10 && f < 30000) line(crisp(fx(f)), 671, crisp(fx(f)), 1001, k === 1 ? '#808080' : '#c4c4c4', k === 1 ? 1 : 1.5);
  }
}
line(L, 671.5, R, 671.5, '#888');
line(L, 1001.5, R, 1001.5, '#888');
for (const f of [10, 20, 30, 40, 50, 60, 70, 80, 100, 200, 300, 400, 500, 600, 800, 1e3, 2e3, 3e3, 4e3, 5e3, 6e3, 7e3, 8e3, 1e4, 2e4, 3e4]) {
  text(Math.round(fx(f)) + 1, 1019, f === 3e4 ? '30kHz' : f >= 1000 ? f / 1000 + 'k' : f, 'mid');
}

line(557, 342.5, R, 342.5, '#000', 1.5);

const step = [[180,777],[400,779],[600,781],[650,784],[672,795],[684,830],[690,900],[693,1100],[697,1400],[702,1500],[706,1370],[708,1000],[711,760],[715,480],[720,310],[724,264],[728,310],[732,408],[737,382],[740,440],[745,720],[750,995],[755,780],[761,620],[767,560],[773,484],[778,560],[783,645],[790,635],[795,700],[803,840],[812,940],[820,976],[828,930],[835,840],[840,812],[848,800],[853,820],[858,870],[865,909],[871,870],[877,824],[890,796],[899,755],[906,738],[916,745],[928,744],[943,750],[951,730],[960,714],[970,732],[985,770],[1002,768],[1018,785],[1035,802],[1062,785],[1085,812],[1110,832],[1138,845],[1155,825],[1172,780],[1185,720],[1197,675],[1208,657],[1220,675],[1232,725],[1247,780],[1258,803],[1268,811],[1285,796],[1300,790],[1328,796],[1350,820],[1370,838],[1388,815],[1405,770],[1420,750],[1438,744],[1455,755],[1472,778],[1490,789],[1522,773]]
  .map(([x, y]) => [500 + x / 3, 180 + y / 3])
  .concat([[1020.4,443.3],[1035,438],[1051,445.7],[1070,436],[1092.5,442],[1111.6,439.7],[1140.3,441.7],[1158.2,439.3],[1199,443.3],[1227.7,437.3],[1256.4,442.7],[1312.5,440.7],[1349.5,443.3],[1395,441],[1457,441]]);
trace(step, '#202068', 'top');
trace([[1370.5,269],[1381,305],[1394,342.3],[1408,377.5],[1420,403.3],[1433,425.5],[1444.5,436.5],[1455,440.3],[1943,440.3]], '#00f', 'top');

trace([[818.5,1002],[823.8,963],[829.6,936.7],[836.9,921.7],[847.5,915.7],[856.3,921.7],[863.5,936.7],[869.4,960],[877,1002]], '#000', 'bottom');
trace([[894.6,1002],[903.3,979],[915.9,945],[926.6,928.3],[938.7,914],[946.9,904.3],[954.7,902.3],[960.5,906.7],[969.2,916],[975,918.4],[984.7,918.7],[992,915],[1001.7,903.3],[1011.4,892.3],[1021,889.3],[1029.3,894],[1039.5,906.7],[1045.3,898.3],[1052.6,875],[1059.9,858.3],[1069.6,845],[1077.8,840.3],[1089,836.7],[1103.5,821.7],[1111.7,818.6],[1117,818.1],[1122.9,818.8],[1132.6,822.7],[1140.8,836.7],[1147,848.7],[1150.5,841.7],[1158.3,810],[1167,783.3],[1178.6,755],[1188.3,737.3],[1198,732],[1204,731.6],[1212.6,732.2],[1222.3,736],[1235.3,743],[1244,737.7],[1260,721],[1268.9,717.3],[1279.3,715.7],[1287.8,718],[1302.4,729.7],[1311.3,720.7],[1321.7,715.3],[1330.2,720],[1340.6,728.3],[1351.5,727],[1363.3,727.3],[1373.6,723.3],[1391.6,709.3],[1415.2,685],[1429.3,674.3],[1441,671.7],[1453,672.7],[1474.2,679],[1495.4,681.7],[1509.6,689.3],[1523.7,701],[1534,705],[1543.5,702.3],[1559,691.7],[1573.3,688.7],[1587.4,691],[1601.6,699.3],[1618,711.7],[1631.3,716],[1651,711.7],[1667.7,716],[1689,736.7],[1707.8,757.3],[1724.3,768.3],[1743,777.7],[1755,786],[1771.5,805],[1790.4,833.3],[1804.5,848],[1821,858.3],[1840,871.7],[1854,877.7],[1884.7,883.3],[1905,884]], '#000', 'bottom');

// Markers and cursor readouts.
line(1457.5, 262, 1457.5, 638, '#188018', 1);
parts.push('<path d="M1450 248h14v14l-7 7-7-7z" fill="#0a820a"/>');
text(1457, 260, 'R', 'flag mid');
text(1461, 287, '23.6 ms', 'readout');
parts.push('<path d="M710 248h29v14h-9l-5 6-6-6h-9z" fill="#000080"/>');
text(725, 260, 'Ref', 'flag mid');
rect(524, 334.5, 33, 16, 'fill="#fff" stroke="#00f" stroke-width="1.5"');
text(555, 347, '26.2', 'cursor end');
rect(1429, 638.5, 53, 17, 'fill="#fff" stroke="#00f" stroke-width="1.5"');
text(1456, 652, '23.63m', 'cursor mid');

svg.innerHTML = parts.join('');
```
